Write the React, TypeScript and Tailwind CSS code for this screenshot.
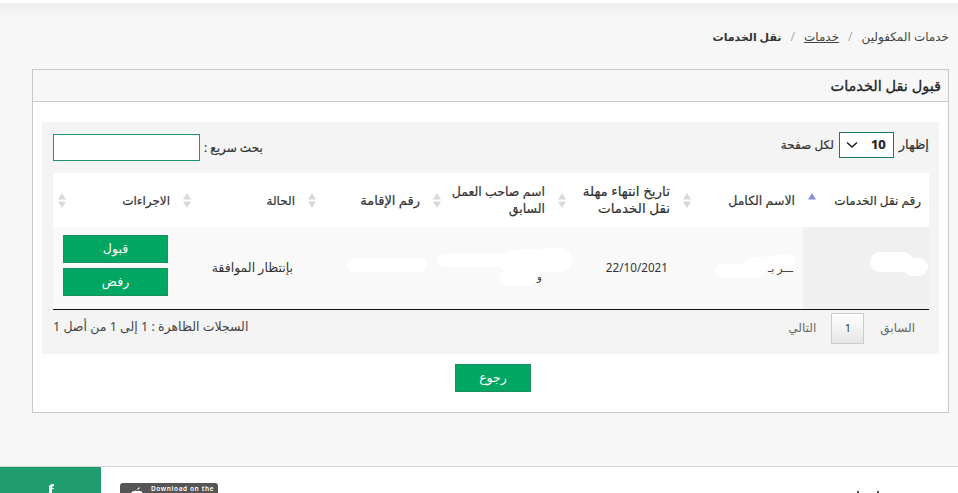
import type { ReactNode } from "react";

function Sort({ up }: { up?: boolean }) {
  return (
    <svg width="8" height="15" viewBox="0 0 8 15" className="shrink-0">
      <path d="M4 0 L8 6.5 L0 6.5 Z" fill={up ? "#8a8fd8" : "#d9d9d9"} />
      {!up && <path d="M4 15 L8 8.5 L0 8.5 Z" fill="#d9d9d9" />}
    </svg>
  );
}

function Head({ children, up, size }: { children: ReactNode; up?: boolean; size: string }) {
  return (
    <th className="p-0 pr-[8px] pl-[5px] font-normal align-middle text-right">
      <div className="flex items-center justify-between">
        <span className={`${size} leading-[17px] text-[#333] [-webkit-text-stroke:0.2px_#333]`}>{children}</span>
        <Sort up={up} />
      </div>
    </th>
  );
}

function Btn({ children, w }: { children: ReactNode; w: string }) {
  return (
    <button className={`${w} h-[28px] bg-[#00a661] border border-[#1b8f60] text-white text-[12.5px] leading-none flex items-center justify-center`}>
      {children}
    </button>
  );
}

function Blob({ className }: { className: string }) {
  return <div className={`absolute bg-white rounded-full ${className}`} />;
}

export default function App() {
  return (
    <div dir="rtl" className="w-[958px] h-[493px] overflow-hidden bg-[#f7f7f7] flex flex-col text-[#333] font-['Noto_Sans','DejaVu_Sans',sans-serif]">
      <div className="h-[3px] bg-white shrink-0" />
      <div className="h-[14px] shrink-0 bg-gradient-to-b from-[#ececec] to-[#f7f7f7]" />

      <div className="h-[38px] mb-[14px] shrink-0 pr-[9px] flex items-center text-[12px] leading-[17px] text-[#444]">
        <span>خدمات المكفولين</span>
        <span className="mx-[9px] text-[#aaa]">/</span>
        <a className="underline">خدمات</a>
        <span className="mx-[9px] text-[#aaa]">/</span>
        <b className="font-bold text-[11px] text-[#333]">نقل الخدمات</b>
      </div>

      <div className="mr-[9px] ml-[32px] h-[344px] shrink-0 border border-[#c9c9c9] bg-white flex flex-col">
        <div className="h-[32px] shrink-0 bg-[#f7f7f7] border-b border-[#c9c9c9] flex items-center pr-[7px] text-[14.5px] text-[#222] [-webkit-text-stroke:0.3px_#222]">
          قبول نقل الخدمات
        </div>

        <div className="mt-[20px] mx-[9px] h-[232px] shrink-0 bg-[#f4f4f4] pl-[11px] pr-[10px] flex flex-col">
          <div className="h-[51px] shrink-0 flex items-center justify-between text-[12px] [-webkit-text-stroke:0.2px_#333]">
            <div className="flex items-center gap-[5px] -mt-[5px]">
              <span className="text-[13px]">إظهار</span>
              <div className="w-[55px] h-[26px] bg-white border border-[#1f7a5c] flex items-center justify-between pr-[7px] pl-[6px]">
                <span className="font-bold text-[13px] text-[#222]">10</span>
                <svg width="12" height="8" viewBox="0 0 12 8" fill="none" stroke="#222" strokeWidth="1.6">
                  <path d="M1 1.5 L6 6 L11 1.5" />
                </svg>
              </div>
              <span>لكل صفحة</span>
            </div>
            <div className="flex items-center gap-[4px]">
              <span>بحث سريع :</span>
              <div className="w-[147px] h-[27px] bg-white border border-[#1e9470]" />
            </div>
          </div>

          <table className="w-[876px] table-fixed border-collapse shrink-0">
            <colgroup>
              <col className="w-[126px]" />
            </colgroup>
            <thead>
              <tr className="h-[54px] bg-white">
                <Head up size="text-[12px]">رقم نقل الخدمات</Head>
                <Head size="text-[12.5px]">الاسم الكامل</Head>
                <Head size="text-[13.5px]">تاريخ انتهاء مهلة<br />نقل الخدمات</Head>
                <Head size="text-[12.5px]">اسم صاحب العمل<br />السابق</Head>
                <Head size="text-[13px]">رقم الإقامة</Head>
                <Head size="text-[12px]">الحالة</Head>
                <Head size="text-[12px]">الاجراءات</Head>
              </tr>
            </thead>
            <tbody>
              <tr className="h-[82px] bg-[#f9f9f9] border-b border-[#111] text-[11.7px]">
                <td className="bg-[#f0f0f0] relative">
                  <Blob className="right-[16px] top-[25px] w-[43px] h-[20px]" />
                  <Blob className="right-[1px] top-[31px] w-[25px] h-[18px]" />
                </td>
                <td className="relative pr-[10px] text-right">
                  <span className="text-[#444] text-[11px]">ـــر بـ</span>
                  <Blob className="left-[37px] top-[37px] w-[50px] h-[14px]" />
                  <Blob className="left-[67px] top-[29px] w-[51px] h-[13px] -rotate-6" />
                </td>
                <td className="pr-[10px] text-right text-[#333]">22/10/2021</td>
                <td className="relative">
                  <span className="absolute left-[107px] top-[29px] text-[8px] leading-none text-[#777]">ـ</span>
                  <span className="absolute left-[109px] top-[44px] text-[10px] leading-none text-[#333]">و</span>
                  <Blob className="left-[9px] top-[27px] w-[80px] h-[13px]" />
                  <Blob className="left-[72px] top-[22px] w-[72px] h-[24px] -rotate-3" />
                  <Blob className="left-[72px] top-[43px] w-[37px] h-[16px]" />
                </td>
                <td className="relative">
                  <div className="absolute left-[50px] top-[44px] w-[64px] border-t border-dashed border-[#c4c4c4]" />
                  <Blob className="left-[44px] top-[31px] w-[80px] h-[14px]" />
                </td>
                <td className="pr-[10px] pt-[1px] text-right text-[12.5px] text-[#333]">بإنتظار الموافقة</td>
                <td className="pr-[10px] pb-[4px]">
                  <div className="flex flex-col gap-[5px]">
                    <Btn w="w-[105px]">قبول</Btn>
                    <Btn w="w-[105px]">رفض</Btn>
                  </div>
                </td>
              </tr>
            </tbody>
          </table>

          <div className="pt-[3px] h-[34px] flex items-center justify-between pr-[14px]">
            <div className="flex items-center text-[12px] text-[#666]">
              <span>السابق</span>
              <span className="mr-[16px] ml-[15px] w-[33px] h-[31px] border border-[#ccc] bg-gradient-to-b from-white to-[#e6e6e6] flex items-center justify-center text-[#333] text-[11px]">1</span>
              <span>التالي</span>
            </div>
            <span className="text-[12.5px] text-[#444] -mt-[2px]">السجلات الظاهرة : 1 إلى 1 من أصل 1</span>
          </div>
        </div>

        <div className="mt-[10px] pl-[5px] flex justify-center">
          <Btn w="w-[76px]">رجوع</Btn>
        </div>
      </div>

      <div dir="ltr" className="mt-[53px] flex-1 bg-white border-t border-[#d5d5d5] flex relative">
        <div className="w-[101px] self-stretch bg-[#1f9d6f] flex justify-center">
          <svg width="8" height="9" viewBox="0 0 8 9" className="mt-[17px]">
            <path d="M2 9 V3 Q2 0 7 0 V2 Q5 2 5 4 H7 V5 H5 V9 Z" fill="#fff" />
          </svg>
        </div>
        <div className="ml-[19px] mt-[16px] w-[98px] h-[10px] bg-[#555] rounded-t-[3px] flex items-start">
          <svg width="14" height="6" viewBox="0 0 14 6" className="ml-[10px] mt-[4px] shrink-0">
            <path d="M1 6 Q3 3 7 4 Q11 3 13 6 Z M7 3 Q7 1 10 0 Q10 2 7 3 Z" fill="#fff" />
          </svg>
          <span className="ml-[7px] mt-[2px] text-[6.5px] leading-[8px] tracking-[0.6px] font-semibold text-white whitespace-nowrap">Download on the</span>
        </div>
        <div className="absolute left-[857px] top-[24px] w-[2px] h-[2px] bg-[#555]" />
        <div className="absolute left-[877px] top-[24px] w-[2px] h-[2px] bg-[#555]" />
      </div>
    </div>
  );
}
